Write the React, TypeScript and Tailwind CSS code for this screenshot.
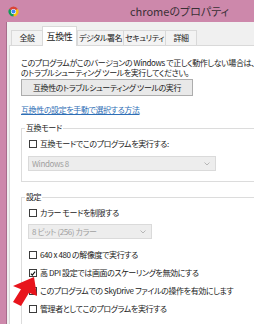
import React from 'react';

const jp = "font-['Noto_Sans_CJK_JP','Noto_Sans',sans-serif] [font-feature-settings:'palt']";

function ChromeIcon() {
  return (
    <svg width="11" height="11" viewBox="0 0 24 24">
      <path d="M12 12 L2.47 6.5 A11 11 0 0 1 21.53 6.5 Z" fill="#db4437" />
      <path d="M12 12 L21.53 6.5 A11 11 0 0 1 12 23 Z" fill="#f4c20d" />
      <path d="M12 12 L12 23 A11 11 0 0 1 2.47 6.5 Z" fill="#0f9d58" />
      <circle cx="12" cy="12" r="5.6" fill="#fff" />
      <circle cx="12" cy="12" r="4.4" fill="#4285f4" />
    </svg>
  );
}

function Checkbox({ checked }: { checked?: boolean }) {
  return (
    <span className="w-[8px] h-[8px] border border-[#3c3c3c] bg-white flex items-center justify-center shrink-0">
      {checked && (
        <svg width="7" height="7" viewBox="0 0 8 8">
          <path d="M1.2 4.2 L3.1 6.2 L6.8 1.6" stroke="#111" strokeWidth="1.5" fill="none" />
        </svg>
      )}
    </span>
  );
}

function Row({ label, checked }: { label: string; checked?: boolean }) {
  return (
    <div className="h-[18px] flex items-center gap-[3px] pl-[1px]">
      <Checkbox checked={checked} />
      <span className="whitespace-nowrap">{label}</span>
    </div>
  );
}

function Select({ value, width }: { value: string; width: string }) {
  return (
    <div className={`${width} h-[15px] border border-[#dadada] bg-[#ededed] flex items-center justify-between pl-[3px] pr-[5px] text-[#a0a0a0]`}>
      <span className="whitespace-nowrap">{value}</span>
      <svg width="6" height="4" viewBox="0 0 6 4">
        <path d="M0.5 0.5 L3 3 L5.5 0.5" stroke="#b0b0b0" strokeWidth="0.9" fill="none" />
      </svg>
    </div>
  );
}

export default function App() {
  const tabs = [
    { name: '全般', w: 'w-[31px]' },
    { name: '互換性', w: 'w-[35px]', active: true },
    { name: 'デジタル署名', w: 'w-[46px]' },
    { name: 'セキュリティ', w: 'w-[42px]' },
    { name: '詳細', w: 'w-[32px]' },
  ];

  return (
    <div className={`relative w-[254px] h-[324px] overflow-hidden bg-[#cd88ab] text-[8px] tracking-[-0.4px] text-[#222] ${jp}`}>
      {/* Title bar */}
      <div className="h-[22px] flex items-center pl-[8px]">
        <ChromeIcon />
        <span className="ml-[111px] text-[11px] tracking-normal text-[#3a3036] leading-none">chromeのプロパティ</span>
      </div>

      <div className="flex h-[302px]">
        <div className="w-[7px] shrink-0 border-r border-[#a86d8c]" />
        <div className="flex-1 bg-[#f0f0f0] flex flex-col">
          {/* Tabs */}
          <div className="h-[23px] flex items-end pl-[4px] relative z-10">
            {tabs.map((t) =>
              t.active ? (
                <div
                  key={t.name}
                  className={`${t.w} h-[20px] bg-white border-x border-t border-[#d9d9d9] flex items-center justify-center pt-[1px] text-[9px] -mb-[1px]`}
                >
                  {t.name}
                </div>
              ) : (
                <div
                  key={t.name}
                  className={`${t.w} h-[15px] bg-[#f3f3f3] border-l border-t border-[#d9d9d9] last:border-r flex items-center justify-center whitespace-nowrap`}
                >
                  {t.name}
                </div>
              )
            )}
          </div>

          {/* Panel */}
          <div className="ml-[2px] flex-1 bg-white border-l border-t border-[#d9d9d9] pl-[11px] pt-[12px] leading-[10px] overflow-hidden">
            <p className="whitespace-nowrap">このプログラムがこのバージョンの Windows で正しく動作しない場合は、</p>
            <p className="whitespace-nowrap">のトラブルシューティング ツールを実行してください。</p>

            <button className="mt-[1px] w-[172px] h-[17px] border border-[#adadad] bg-[#e9e9e9] flex items-center justify-center text-[#222]">
              互換性のトラブルシューティング ツールの実行
            </button>

            <a className="block mt-[9px] leading-[10px] text-[#2f6fb6] underline w-fit">互換性の設定を手動で選択する方法</a>

            {/* 互換モード */}
            <div className="relative mt-[13px] w-[260px] border border-[#dcdcdc] pl-[6px] pt-[8px] pb-[10px]">
              <span className="absolute -top-[6px] left-[3px] bg-white px-[1px] leading-[10px]">互換モード</span>
              <div className="h-[14px] flex items-center gap-[3px] pl-[1px]">
                <Checkbox />
                <span className="whitespace-nowrap">互換モードでこのプログラムを実行する:</span>
              </div>
              <div className="mt-[5px]">
                <Select value="Windows 8" width="w-[188px]" />
              </div>
            </div>

            {/* 設定 */}
            <div className="relative mt-[15px] w-[260px] border border-[#dcdcdc] pl-[6px] pt-[8px] pb-[10px]">
              <span className="absolute -top-[6px] left-[3px] bg-white px-[1px] leading-[10px]">設定</span>
              <div className="h-[14px] flex items-center gap-[3px] pl-[1px]">
                <Checkbox />
                <span className="whitespace-nowrap">カラー モードを制限する</span>
              </div>
              <div className="mt-[4px]">
                <Select value="8 ビット (256) カラー" width="w-[124px]" />
              </div>
              <div className="mt-[7px]">
                <Row label="640 x 480 の解像度で実行する" />
                <Row label="高 DPI 設定では画面のスケーリングを無効にする" checked />
                <Row label="このプログラムでの SkyDrive ファイルの操作を有効にします" />
                <Row label="管理者としてこのプログラムを実行する" />
              </div>
            </div>
          </div>
        </div>
      </div>

      {/* Red annotation arrow */}
      <svg className="absolute inset-0 pointer-events-none" width="254" height="324" viewBox="0 0 254 324">
        <polygon
          points="34,277 37,296 29,292.7 21,306 13,302 21,289.3 13,286"
          fill="#e8141c"
        />
      </svg>
    </div>
  );
}
